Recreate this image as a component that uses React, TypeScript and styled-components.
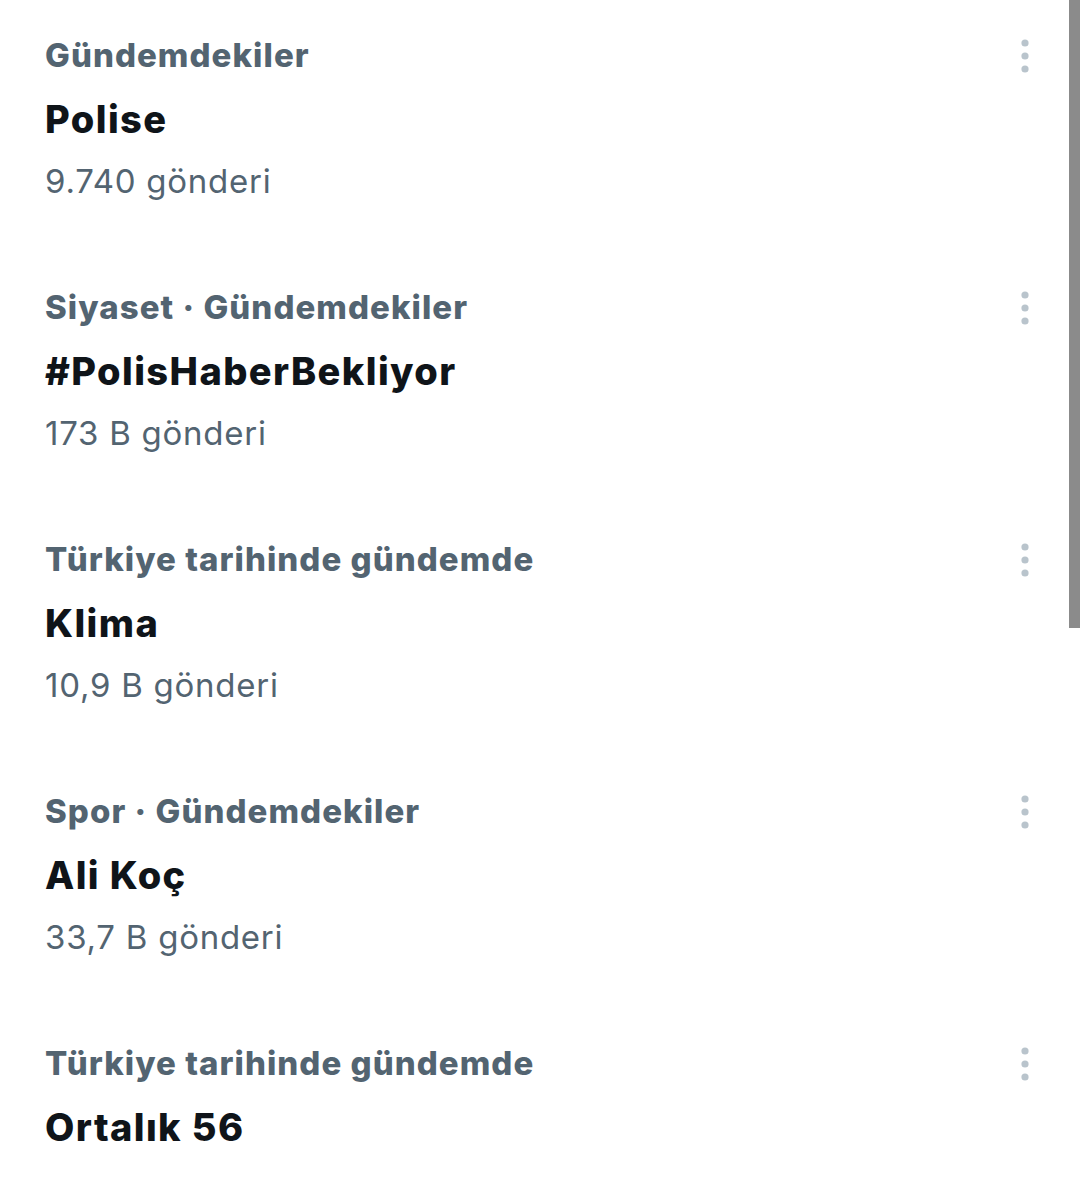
import React, {FC} from 'react';
import styled, {createGlobalStyle} from "styled-components";

interface ITrend {
    category: string
    title: string
    count?: string
}

const trends: ITrend[] = [
    {category: 'Gündemdekiler', title: 'Polise', count: '9.740 gönderi'},
    {category: 'Siyaset · Gündemdekiler', title: '#PolisHaberBekliyor', count: '173 B gönderi'},
    {category: 'Türkiye tarihinde gündemde', title: 'Klima', count: '10,9 B gönderi'},
    {category: 'Spor · Gündemdekiler', title: 'Ali Koç', count: '33,7 B gönderi'},
    {category: 'Türkiye tarihinde gündemde', title: 'Ortalık 56'},
]

const GlobalStyle = createGlobalStyle`
  html, body {
    margin: 0;
    padding: 0;
    background: #ffffff;
  }

  body {
    font-family: Inter, "Noto Sans", "Liberation Sans", sans-serif;
    overflow: hidden;
  }
`

const MoreIcon: FC = () => (
    <svg width="40" height="40" viewBox="0 0 40 40">
        <circle cx="20" cy="7" r="3.6" fill="#b9c4cc"/>
        <circle cx="20" cy="20" r="3.6" fill="#b9c4cc"/>
        <circle cx="20" cy="33" r="3.6" fill="#b9c4cc"/>
    </svg>
)

const TrendItem: FC<ITrend> = ({category, title, count}) => (
    <Row>
        <Info>
            <Category>{category}</Category>
            <Title>{title}</Title>
            {count && <Count>{count}</Count>}
        </Info>
        <MoreButton>
            <MoreIcon/>
        </MoreButton>
    </Row>
)

const App: FC = () => {
    return (
        <Page>
            <GlobalStyle/>
            <List>
                {trends.map(t => <TrendItem key={t.title} {...t}/>)}
            </List>
            <Scrollbar/>
        </Page>
    )
}

export default App;

const Page = styled.div`
  position: relative;
  width: 1080px;
  height: 1191px;
  overflow: hidden;
  background: #ffffff;
`
const List = styled.div`
  display: flex;
  flex-direction: column;
`
const Row = styled.div`
  display: flex;
  align-items: flex-start;
  height: 252px;
  box-sizing: border-box;
  padding: 35px 35px 0 45px;
`
const Info = styled.div`
  flex: 1;
  display: flex;
  flex-direction: column;
`
const Category = styled.div`
  font-weight: 800;
  font-size: 33px;
  line-height: 40px;
  color: #536471;
  letter-spacing: 1.05px;
`
const Title = styled.div`
  margin-top: 20px;
  font-weight: 800;
  font-size: 38px;
  line-height: 48px;
  color: #0f1419;
  letter-spacing: 1.4px;
`
const Count = styled.div`
  margin-top: 16px;
  font-weight: 400;
  font-size: 33px;
  line-height: 44px;
  color: #536471;
  letter-spacing: 0.75px;
`
const MoreButton = styled.div`
  width: 40px;
  height: 40px;
  margin-top: 1px;
  display: flex;
  align-items: center;
  justify-content: center;
`
const Scrollbar = styled.div`
  position: absolute;
  top: 0;
  right: 0;
  width: 11px;
  height: 628px;
  background: #8b8b8b;
`
